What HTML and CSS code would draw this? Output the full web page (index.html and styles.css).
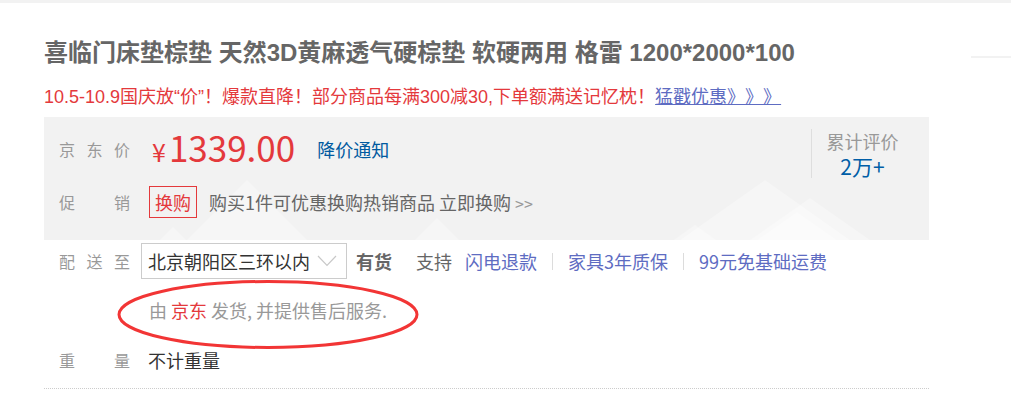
FILE: index.html
```html
<!DOCTYPE html>
<html lang="zh-CN">
<head>
    <meta charset="UTF-8">
    <title>喜临门床垫棕垫</title>
    <link rel="stylesheet" href="styles.css">
</head>
<body>
    <div class="topbar"></div>
    <div class="page">
        <div class="item-info">
            <h1 class="sku-name">喜临门床垫棕垫 天然3D黄麻透气硬棕垫 软硬两用 格雷 1200*2000*100</h1>
            <div class="news">10.5-10.9国庆放“价”！爆款直降！部分商品每满300减30,下单额满送记忆枕！<a href="#">猛戳优惠》》》</a></div>

            <div class="summary">
                <svg class="summary-bg" width="885" height="123" viewBox="0 0 885 123">
                    <g fill="#fff" fill-opacity="0.3">
                        <polygon points="143,123 203,63 263,123"/>
                        <polygon points="116,123 129,110 142,123"/>
                        <polygon points="371,123 393,101 415,123"/>
                        <polygon points="636,123 721,63 806,123"/>
                        <polygon points="706,123 766,81 826,123"/>
                        <polygon points="713,123 753,95 793,123"/>
                        <polygon points="630,123 651,108 672,123"/>
                    </g>
                </svg>
                <div class="summary-main">
                    <div class="row price-row">
                        <div class="dt">京 东 价</div>
                        <div class="price"><span class="yen">¥</span>1339.00</div>
                        <a class="notice" href="#">降价通知</a>
                    </div>
                    <div class="row promo-row">
                        <div class="dt">促 销</div>
                        <span class="tag">换购</span>
                        <span class="promo-text">购买1件可优惠换购热销商品 立即换购 <span class="more">&gt;&gt;</span></span>
                    </div>
                </div>
                <div class="comment">
                    <div class="comment-title">累计评价</div>
                    <a class="comment-count" href="#">2万+</a>
                </div>
            </div>

            <div class="row stock-row">
                <div class="dt">配 送 至</div>
                <div class="area">
                    <span>北京朝阳区三环以内</span>
                    <svg width="20" height="12" viewBox="0 0 20 12"><polyline points="1,1 10,10.5 19,1" fill="none" stroke="#c8c8c8" stroke-width="1.2"/></svg>
                </div>
                <span class="store-stat">有货</span>
                <span class="support">支持</span>
                <a class="service" href="#">闪电退款</a>
                <span class="sep"></span>
                <a class="service" href="#">家具3年质保</a>
                <span class="sep"></span>
                <a class="service" href="#">99元免基础运费</a>
            </div>
            <div class="serve-by">由 <span class="jd">京东</span> 发货, 并提供售后服务.</div>

            <div class="row weight-row">
                <div class="dt">重 量</div>
                <span class="weight">不计重量</span>
            </div>
        </div>
        <div class="aside"></div>

        <!-- red annotation ring -->
        <svg class="mark" width="302" height="71" viewBox="0 0 302 71">
            <ellipse cx="151" cy="35.5" rx="149" ry="33" fill="none" stroke="#f23535" stroke-width="3"/>
        </svg>
    </div>
</body>
</html>
```

FILE: styles.css
```css
body {
    margin: 0;
    font-family: "Noto Sans CJK SC", sans-serif;
    color: #666;
    background: #fff;
    text-spacing-trim: space-all;
}
a {
    text-decoration: none;
}
.topbar {
    height: 3px;
    background: #f2f2f2;
}
.page {
    position: relative;
    display: flex;
}
.item-info {
    width: 885px;
    margin-left: 44px;
}
.aside {
    flex: 1;
    height: 0;
    margin: 53px 0 0 42px;
    border-top: 2px solid #f2f2f2;
}
.sku-name {
    margin: 0;
    padding-top: 34px;
    font: bold 24px/32px "Liberation Sans", "Noto Sans CJK SC", sans-serif;
    color: #666;
    white-space: nowrap;
}
.news {
    margin-top: 16px;
    font-family: "Liberation Sans", "Noto Sans CJK SC", sans-serif;
    font-size: 18px;
    line-height: 24px;
    color: #e4393c;
    white-space: nowrap;
}
.news a {
    color: #5e6cc2;
    text-decoration: underline;
}
.summary {
    position: relative;
    display: flex;
    height: 123px;
    margin-top: 8px;
    padding-top: 10px;
    box-sizing: border-box;
    background: #f2f2f2;
}
.summary-bg {
    position: absolute;
    left: 0;
    bottom: 0;
}
.summary-main {
    position: relative;
    flex: 1;
}
.row {
    display: flex;
    align-items: center;
    white-space: nowrap;
}
.dt {
    width: 71px;
    margin: 0 11px 0 15px;
    font-size: 16px;
    color: #999;
    text-align: justify;
    text-align-last: justify;
}
.price-row {
    height: 44px;
}
.price {
    margin-left: 11px;
    font-size: 35px;
    line-height: 44px;
    color: #e4393c;
}
.yen {
    margin-right: 3px;
    font-size: 25px;
}
.notice {
    margin-left: 22px;
    font-size: 18px;
    color: #005aa0;
}
.promo-row {
    height: 32px;
    margin-top: 15px;
}
.tag {
    margin-left: 8px;
    padding: 0 5px;
    height: 30px;
    line-height: 30px;
    border: 1px solid #e4393c;
    font-size: 18px;
    color: #e4393c;
}
.promo-text {
    margin-left: 12px;
    font-size: 18px;
    color: #666;
}
.more {
    font-size: 16px;
    color: #999;
}
.comment {
    position: relative;
    width: 101px;
    height: 49px;
    margin: 2px 16px 0 0;
    border-left: 1px solid #dedede;
    text-align: center;
    line-height: 25px;
}
.comment-title {
    font-size: 18px;
    color: #999;
}
.comment-count {
    display: block;
    font-size: 21px;
    color: #005ea7;
}
.stock-row {
    margin-top: 3px;
    height: 36px;
}
.area {
    display: flex;
    align-items: center;
    justify-content: space-between;
    width: 206px;
    height: 36px;
    padding: 0 9px 0 6px;
    box-sizing: border-box;
    border: 1px solid #ccc;
    background: #fff;
    font-size: 18px;
    color: #333;
}
.store-stat {
    margin-left: 9px;
    font-size: 18px;
    font-weight: bold;
    color: #666;
}
.support {
    margin: 0 13px 0 24px;
    font-size: 18px;
    color: #666;
}
.service {
    font-size: 18px;
    color: #5e6cc2;
}
.sep {
    width: 1px;
    height: 17px;
    margin: 0 15px;
    background: #dcdcdc;
}
.serve-by {
    margin: 19px 0 0 105px;
    font-size: 18px;
    line-height: 24px;
    color: #999;
}
.jd {
    color: #e4393c;
}
.weight-row {
    height: 24px;
    margin-top: 26px;
    padding-bottom: 16px;
    border-bottom: 1px dotted #ccc;
}
.weight {
    margin-left: 7px;
    font-size: 18px;
    color: #333;
}
.mark {
    position: absolute;
    left: 117px;
    top: 276px;
}
```
